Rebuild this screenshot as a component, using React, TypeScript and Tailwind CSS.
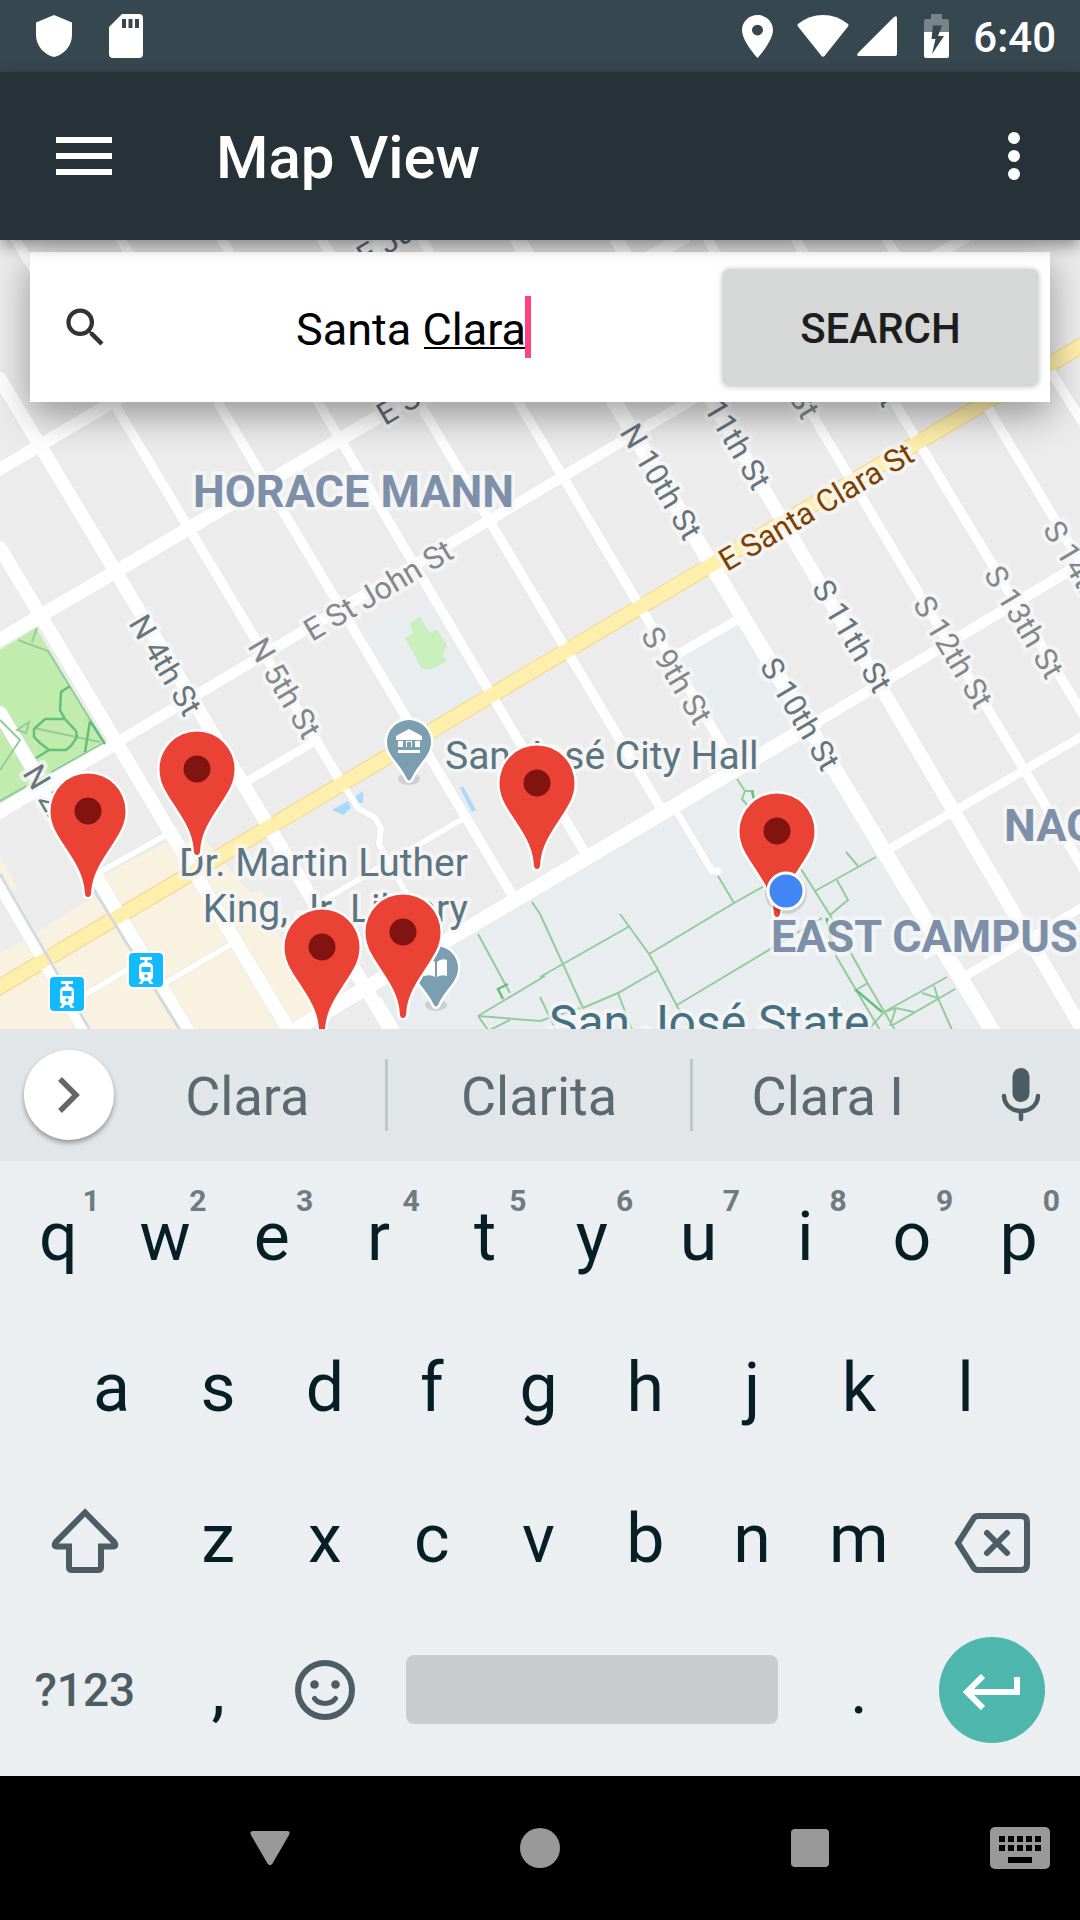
import React from "react";

type Road = { d: string; w: number };

const ROADS: Road[] = [
  { d: "M0 884L86 1032", w: 14 },
  { d: "M0 713L188 1032", w: 14 },
  { d: "M0 548L290 1032", w: 14 },
  { d: "M0 379L392 1032", w: 14 },
  { d: "M16 240L344 787", w: 10 },
  { d: "M121 240L514 898", w: 10 },
  { d: "M222 240L588 858", w: 10 },
  { d: "M322 240L663 812", w: 10 },
  { d: "M422 240L736 768", w: 10 },
  { d: "M518 240L747 624L993 1032", w: 16 },
  { d: "M617 240L1084 1032", w: 14 },
  { d: "M708 240L1084 870", w: 10 },
  { d: "M796 240L1084 716", w: 10 },
  { d: "M887 240L1084 568", w: 10 },
  { d: "M1040 355L1084 424", w: 10 },
  { d: "M0 469L390 238", w: 13 },
  { d: "M-4 642L684 237", w: 14 },
  { d: "M-4 814L114 744", w: 14 },
  { d: "M114 744L540 490L965 238", w: 11 },
  { d: "M288 1034L517 899L815 723", w: 15 },
  { d: "M815 723L1084 562", w: 11 },
  { d: "M678 654L744 616", w: 9 },
  { d: "M886 851L1084 735", w: 9 },
  { d: "M962 978L1084 906", w: 9 },
  { d: "M241 785L317 740", w: 9 },
  { d: "M100 872L168 834", w: 6 },
  { d: "M165 983L230 945", w: 6 },
  { d: "M83 996L128 969", w: 6 },
  { d: "M327 898L461 820", w: 6 },
  { d: "M344 785L358 808L375 818L381 828L379 844L406 893", w: 6 },
  { d: "M678 814L712 871L718 871", w: 7 },
  { d: "M380 1000L398 1030", w: 5 },
];

const PATHS_LIGHT = [
  "M737 779L745 791L754 791M745 791L742 799L748 806",
  "M18 640L48 651L105 744M32 642L37 628M0 801L105 742M0 770L20 740L0 720M34 728L100 742M17 730L29 722L26 733Z",
  "M718 876L734 903L764 886M734 903L649 954L620 914M649 954L658 970L677 1006L696 1040",
  "M540 977L630 926M540 914L583 1008L618 993L658 970M478 934L510 993M478 1016L545 976M478 1016L540 1021L580 1008M478 1016L488 1030M510 1020L490 1030",
  "M677 1005L822 918M532 902L540 914M618 993L632 1030M540 997L556 1030",
  "M801 869L830 915L868 984L895 1030M826 918L836 956L862 1000L880 1030",
  "M815 891L876 857M858 866L846 852M837 880L848 900L830 915",
  "M884 1012L947 977M893 1025L955 989M922 993L938 998L952 1030M938 998L934 986M884 1012L896 1008L914 1012M896 1008L890 1026M854 991L868 983M870 1028L884 1012",
];

const PATHS_DARK = [
  "M70 686L61 692L60 710L65 719L76 731L77 737L71 746L66 750L49 750L40 743L34 737L34 729L45 719L65 719M49 750L36 758M90 721L85 752M90 721L105 744",
  "M827 918L832 950M856 990L882 1012M508 984L498 989L503 999M752 791L754 799",
];

type Label = { t: string; x: number; y: number; r: number; c: string };

const UP = -30.6;
const DOWN = 59.3;
const STREETS: Label[] = [
  { t: "E Julian St", x: 365, y: 268, r: UP, c: "#5f6b72" },
  { t: "E St James St", x: 385, y: 426, r: UP, c: "#5f6b72" },
  { t: "E St John St", x: 312, y: 642, r: UP, c: "#83888b" },
  { t: "E Santa Clara St", x: 727, y: 572, r: UP, c: "#7d4000" },
  { t: "N 2nd St", x: 22, y: 773, r: DOWN, c: "#67757c" },
  { t: "N 4th St", x: 128, y: 623, r: DOWN, c: "#67757c" },
  { t: "N 5th St", x: 247, y: 646, r: DOWN, c: "#83888b" },
  { t: "N 10th St", x: 619, y: 432, r: DOWN, c: "#67757c" },
  { t: "N 11th St", x: 688, y: 382, r: DOWN, c: "#67757c" },
  { t: "N 12th St", x: 737, y: 311, r: DOWN, c: "#83888b" },
  { t: "N 13th St", x: 818, y: 299, r: DOWN, c: "#67757c" },
  { t: "S 9th St", x: 640, y: 635, r: DOWN, c: "#83888b" },
  { t: "S 10th St", x: 759, y: 666, r: DOWN, c: "#67757c" },
  { t: "S 11th St", x: 811, y: 588, r: DOWN, c: "#67757c" },
  { t: "S 12th St", x: 912, y: 604, r: DOWN, c: "#83888b" },
  { t: "S 13th St", x: 983, y: 574, r: DOWN, c: "#83888b" },
  { t: "S 14th St", x: 1042, y: 529, r: DOWN, c: "#83888b" },
];

const PINS = [
  [197, 769],
  [88, 811],
  [537, 783],
  [777, 831],
  [403, 932],
  [322, 947],
];

function Train({ x, y }: { x: number; y: number }) {
  return (
    <g transform={`translate(${x} ${y})`}>
      <rect x="-2" y="-2" width="38" height="38" rx="6" fill="#fff" />
      <rect width="34" height="34" rx="4" fill="#12bbff" />
      <path d="M11 4h12v3h-4.500v2.500h1.500q4 1 4 5v9q0 3-2.500 3.500l3 4h-3.500l-2-3h-4l-2 3h-3.500l3-4Q10 26.500 10 23.500v-9q0-4 4-5h1.500V7H11z" fill="#fff" />
      <rect x="12.500" y="14" width="9" height="5" fill="#12bbff" />
      <circle cx="17" cy="23" r="1.800" fill="#12bbff" />
    </g>
  );
}

function PoiPin({ x, y, children }: { x: number; y: number; children: React.ReactNode }) {
  return (
    <g transform={`translate(${x} ${y})`}>
      <ellipse cy="37" rx="11" ry="6" fill="#000" opacity="0.12" />
      <path
        d="M-22 0A22 22 0 0 1 22 0C22 14 10 20 2 37Q0 40 -2 37C-10 20 -22 14 -22 0Z"
        fill="#7b9eb0"
        stroke="#fff"
        strokeWidth="5"
        paintOrder="stroke"
      />
      {children}
    </g>
  );
}

function StreetMap() {
  return (
    <svg
      className="absolute inset-0 h-full w-full"
      viewBox="0 240 1080 789"
      preserveAspectRatio="xMidYMid slice"
      role="img"
      aria-label="Map of downtown San José"
      fontFamily="Roboto, sans-serif"
    >
      <rect y="240" width="1080" height="789" fill="#ececec" />
      <path d="M358 630L424 598L482 693L413 726Z" fill="#e9edf0" />
      <path d="M741 625L681 657L712 723L726 750L800 732Z" fill="#e9edf0" />
      <path d="M375 997L736 772L805 735L884 853L950 965L990 1032H392Z" fill="#e9edf0" />
      <path d="M410 623L420 617L429 632L437 630L447 645L442 655L447 661L432 669L422 669L405 638L413 633Z" fill="#c8efbc" />
      <path d="M0 650L36 628L105 744L0 806Z" fill="#c1ecae" />
      <path d="M36 933L100 893L103 875L165 843L205 840L250 893L262 890L300 990L335 970L352 990L289 1032H0V953Z" fill="#faf2e1" />
      <path d="M0 857L17 888L8 894L0 882Z" fill="#faf2e1" />
      <path d="M332 810L348 801L351 808L343 815ZM355 797L363 791V803L358 803ZM460 788L463 786L476 810L472 812Z" fill="#a8daff" />
      <g fill="none">
        {ROADS.map((r) => (
          <path key={r.d} d={r.d} stroke="#e2e3e4" strokeWidth={r.w + 1} />
        ))}
        <path d="M-4 989L1084 344" stroke="#f3d68c" strokeWidth="16" />
        {ROADS.map((r) => (
          <path key={r.d} d={r.d} stroke="#fff" strokeWidth={r.w} strokeLinecap="round" />
        ))}
        <path d="M924 960L945 948L928 930Z" fill="#fff" />
        <path d="M-4 989L1084 344" stroke="#ffefac" strokeWidth="14" />
        <path d="M0 874L90 1030M94 890L180 1030" stroke="#d6d9dc" strokeWidth="3" />
        {PATHS_LIGHT.map((d) => (
          <path key={d} d={d} stroke="#93cc9b" strokeWidth="2" />
        ))}
        {PATHS_DARK.map((d) => (
          <path key={d} d={d} stroke="#63bf79" strokeWidth="2.500" />
        ))}
      </g>

      <g fontSize="31" stroke="#f7f7f7" strokeOpacity="0.75" strokeWidth="8" strokeLinejoin="round" paintOrder="stroke">
        {STREETS.map((s) => (
          <text key={s.t} transform={`translate(${s.x} ${s.y}) rotate(${s.r})`} fill={s.c}>
            {s.t}
          </text>
        ))}
      </g>

      <Train x={129} y={953} />
      <Train x={50} y={977} />

      <g stroke="#f7f7f7" strokeOpacity="0.75" strokeWidth="8" strokeLinejoin="round" paintOrder="stroke">
        <g fontSize="45" fontWeight="700" fill="#7d8fa9">
          <text x="193" y="507">HORACE MANN</text>
          <text x="1004" y="841">NAGLEE PARK</text>
          <text x="771" y="952">EAST CAMPUS</text>
        </g>
        <g fontSize="39" fill="#5b7582">
          <text x="445" y="769">San José City Hall</text>
          <text x="468" y="876" textAnchor="end">Dr. Martin Luther</text>
          <text x="468" y="922" textAnchor="end">King, Jr. Library</text>
        </g>
        <text x="549" y="1039" fontSize="48" fill="#447082">San José State</text>
      </g>

      <PoiPin x={409} y={742}>
        <path d="M0-13L13-6V-2H-13V-6ZM-11-1h5v6h-5zM-3-1h6v6h-1V0h-4V5H-3zM6-1h5v6H6zM-11 8H11V11H-11Z" fill="#fff" />
      </PoiPin>
      <PoiPin x={436} y={968}>
        <path d="M-12-8Q-5-10 -1-6V9Q-5 6 -12 8ZM11-8Q5-10 1-6V9Q5 6 11 8Z" fill="#fff" />
      </PoiPin>

      {PINS.map(([x, y]) => (
        <g key={x} transform={`translate(${x} ${y})`}>
          <path
            d="M-37.500 0A37.500 37.500 0 0 1 37.500 0C37.500 14 31 23 24 34C13 51 4 63 3 83Q2.500 86 0 86Q-2.500 86-3 83C-4 63-13 51-24 34C-31 23-37.500 14-37.500 0Z"
            fill="#ea4335"
            stroke="#fff"
            strokeWidth="5"
            paintOrder="stroke"
          />
          <circle r="13.500" fill="#811411" />
        </g>
      ))}

      <circle cx="786" cy="893" r="21" fill="#000" opacity="0.12" />
      <circle cx="786" cy="891" r="18" fill="#4285f4" stroke="#fff" strokeWidth="3" />
    </svg>
  );
}

function StatusBar() {
  return (
    <header className="flex h-[72px] shrink-0 items-center bg-[#37474f] pl-9 pr-6 text-white">
      <svg className="mr-[37px] h-[42px] w-9" viewBox="0 0 36 42" fill="#fff" aria-hidden="true">
        <path d="M18 0L36 7.500V20C36 31 27.500 40 18 42C8.500 40 0 31 0 20V7.500Z" />
      </svg>
      <svg className="h-11 w-[34px]" viewBox="0 0 34 44" fill="#fff" fillRule="evenodd" aria-hidden="true">
        <path d="M13 0H30Q34 0 34 4V40Q34 44 30 44H4Q0 44 0 40V13ZM13 5V14H17V5ZM19.500 5V14H23.500V5ZM26 5V14H30V5Z" />
      </svg>
      <span className="flex-1" />
      <svg className="mr-6 h-[43px] w-[31px]" viewBox="5 2 14 20" preserveAspectRatio="none" fill="#fff" aria-hidden="true">
        <path d="M12 2C8.130 2 5 5.130 5 9c0 5.250 7 13 7 13s7-7.750 7-13c0-3.870-3.130-7-7-7zm0 9.500a2.500 2.500 0 0 1 0-5 2.500 2.500 0 0 1 0 5z" />
      </svg>
      <svg className="mr-2 h-[42px] w-[52px]" viewBox="0 0 52 42" fill="#fff" aria-hidden="true">
        <path d="M1 9Q12 0 26 0T51 9Q52 10 51 11.500L27.500 41Q26 42.500 24.500 41L1 11.500Q0 10 1 9Z" />
      </svg>
      <svg className="mr-[27px] h-10 w-10" viewBox="0 0 40 40" fill="#fff" aria-hidden="true">
        <path d="M37 1Q40-1 40 2V38Q40 40 38 40H2Q-1 40 1 37Z" />
      </svg>
      <svg className="mr-6 h-11 w-[25px]" viewBox="0 0 25 44" aria-hidden="true">
        <path d="M7 0H18V5H23Q25 5 25 7V18H0V7Q0 5 2 5H7Z" fill="#788489" />
        <path d="M0 18H25V42Q25 44 23 44H2Q0 44 0 42Z" fill="#fff" />
        <path d="M9 11.500H18L14 22H20L8 40L11.500 25H7.500Z" fill="#37474f" />
      </svg>
      <time className="pt-1 text-[42px] leading-none font-medium">6:40</time>
    </header>
  );
}

function AppBar() {
  return (
    <div className="relative z-10 flex h-[168px] shrink-0 items-center bg-[#263238] pl-14 pr-12 text-white shadow-[0_6px_14px_rgba(0,0,0,0.4)]">
      <button aria-label="Open menu" className="flex w-14 flex-col gap-[10px]">
        <span className="h-[6px] w-full bg-white" />
        <span className="h-[6px] w-full bg-white" />
        <span className="h-[6px] w-full bg-white" />
      </button>
      <h1 className="ml-[104px] flex-1 pt-1 text-[60px] leading-none font-medium">Map View</h1>
      <button aria-label="More options" className="flex w-9 flex-col items-center gap-[6px]">
        <span className="size-3 rounded-full bg-white" />
        <span className="size-3 rounded-full bg-white" />
        <span className="size-3 rounded-full bg-white" />
      </button>
    </div>
  );
}

function SearchCard() {
  return (
    <form
      className="relative mx-[30px] mt-3 flex h-[150px] items-center bg-white pl-[30px] pr-3 shadow-[0_12px_36px_rgba(0,0,0,0.38)]"
      onSubmit={(e) => e.preventDefault()}
    >
      <svg className="size-[51px] shrink-0" viewBox="0 0 24 24" fill="#333" aria-hidden="true">
        <path d="M15.500 14h-.79l-.28-.27A6.471 6.471 0 0 0 16 9.500 6.500 6.500 0 1 0 9.500 16c1.610 0 3.090-.59 4.230-1.570l.27.28v.79l5 4.990L20.490 19l-4.990-5zm-6 0C7.010 14 5 11.990 5 9.500S7.010 5 9.500 5 14 7.010 14 9.500 11.990 14 9.500 14z" />
      </svg>
      <div className="relative mr-3 h-[62px] flex-1">
        <input
          aria-label="Search location"
          defaultValue="Santa Clara"
          className="h-full w-full bg-transparent pt-1 text-center text-[45px] text-black outline-none"
        />
        <span className="absolute bottom-[9px] left-[calc(50%+13px)] h-[2px] w-[102px] bg-black" />
        <span className="absolute top-0 left-[calc(50%+114px)] h-full w-[6px] bg-[#ff4081]" />
      </div>
      <button
        type="submit"
        className="h-[116px] w-[315px] shrink-0 rounded-md bg-[#d6d7d7] pt-1 text-[42px] leading-none font-medium text-[#1d1d1d] shadow-[0_1px_6px_rgba(0,0,0,0.3)]"
      >
        SEARCH
      </button>
    </form>
  );
}

const SUGGESTION = "h-[72px] pt-1 text-[54px] leading-none text-[#5b6970]";

function Suggestions() {
  return (
    <div className="flex h-[132px] items-center bg-[#e2e6e9]">
      <div className="w-[110px] shrink-0 pl-6">
        <button aria-label="Expand toolbar" className="flex size-[90px] items-center justify-center rounded-full bg-white shadow-[0_3px_5px_rgba(0,0,0,0.35)]">
          <svg className="h-9 w-[22px]" viewBox="0 0 22 36" fill="none" stroke="#666" strokeWidth="5.500" aria-hidden="true">
            <path d="M2 2L18 18L2 34" />
          </svg>
        </button>
      </div>
      <button className={`flex-[274] ${SUGGESTION}`}>Clara</button>
      <button className={`flex-[302] border-x-[3px] border-[#c1c6c9] ${SUGGESTION}`}>Clarita</button>
      <button className={`flex-[268] ${SUGGESTION}`}>Clara I</button>
      <button aria-label="Voice input" className="flex w-[118px] shrink-0 justify-center">
        <svg className="h-[54px] w-10" viewBox="0 0 40 54" fill="none" stroke="#4c5c64" strokeLinecap="round" aria-hidden="true">
          <rect x="11.500" y="0" width="17" height="34" rx="8.500" fill="#4c5c64" stroke="none" />
          <path d="M3 28C4 48 36 48 37 28M20 44V51" strokeWidth="4.500" />
        </svg>
      </button>
    </div>
  );
}

function Key({ label, hint }: { label: string; hint?: string }) {
  return (
    <button className="relative h-full min-w-0 flex-[107] text-[68px] leading-none text-[#061e26]">
      {label}
      {hint && <span className="absolute top-[25px] right-3 text-[30px] leading-none font-bold text-[#6f7b81]">{hint}</span>}
    </button>
  );
}

const ROW = "flex h-[151px] items-center";
const WIDE_ROW = `${ROW} pl-[5px] pr-[8px]`;
const ICON_KEY = "flex h-full items-center justify-center";

function Keyboard() {
  return (
    <section aria-label="Keyboard" className="shrink-0 bg-[#ebeff2]">
      <Suggestions />
      <div className="pb-[11px]">
        <div className={WIDE_ROW}>
          {"qwertyuiop".split("").map((k, i) => (
            <Key key={k} label={k} hint={String((i + 1) % 10)} />
          ))}
        </div>
        <div className={`${ROW} pl-[58px] pr-[61px]`}>
          {"asdfghjkl".split("").map((k) => (
            <Key key={k} label={k} />
          ))}
        </div>
        <div className={WIDE_ROW}>
          <button aria-label="Shift" className={`flex-[160] ${ICON_KEY}`}>
            <svg className="mt-1 h-[66px] w-[68px]" viewBox="0 0 68 66" fill="none" stroke="#4d5d65" strokeWidth="6" aria-hidden="true">
              <path d="M34 4.500L5 34Q2 38.500 6 38.500H18V59Q18 62 21 62H47Q50 62 50 59V38.500H62Q66 38.500 63 34Z" />
            </svg>
          </button>
          {"zxcvbnm".split("").map((k) => (
            <Key key={k} label={k} />
          ))}
          <button aria-label="Backspace" className={`flex-[160] ${ICON_KEY}`}>
            <svg className="mt-2 h-[60px] w-[76px]" viewBox="0 0 76 60" fill="none" stroke="#4d5d65" strokeWidth="6" aria-hidden="true">
              <path d="M4 30L19.500 5.500Q21 3 24 3H67Q73 3 73 9V51Q73 57 67 57H24Q21 57 19.500 54.500Z" />
              <path d="M33 20L53 40M53 20L33 40" strokeLinecap="round" />
            </svg>
          </button>
        </div>
        <div className={WIDE_ROW}>
          <button className="h-full flex-[160] text-[46px] leading-none font-medium text-[#4d5d65]">?123</button>
          <Key label="," />
          <button aria-label="Emoji" className={`flex-[107] ${ICON_KEY}`}>
            <svg className="size-[60px]" viewBox="0 0 60 60" fill="none" stroke="#4d5d65" aria-hidden="true">
              <circle cx="30" cy="30" r="27" strokeWidth="6" />
              <circle cx="19.500" cy="24.500" r="4.300" fill="#4d5d65" stroke="none" />
              <circle cx="40.500" cy="24.500" r="4.300" fill="#4d5d65" stroke="none" />
              <path d="M19.500 38.500C24 45 36 45 40.500 38.500" strokeWidth="5" strokeLinecap="round" />
            </svg>
          </button>
          <div className="flex-[428]">
            <button aria-label="Space" className="mx-7 block h-[69px] w-[calc(100%-56px)] rounded-lg bg-[#c9cdd0]" />
          </div>
          <Key label="." />
          <div className={`flex-[160] ${ICON_KEY}`}>
            <button aria-label="Enter" className="flex size-[106px] items-center justify-center rounded-full bg-[#4eb6ac]">
              <svg className="mt-1 h-9 w-[58px]" viewBox="0 0 58 36" fill="none" stroke="#fff" strokeWidth="6" aria-hidden="true">
                <path d="M20 2L4 18L20 34M5 18H54V3" />
              </svg>
            </button>
          </div>
        </div>
      </div>
    </section>
  );
}

function NavBar() {
  return (
    <nav className="grid h-36 shrink-0 grid-cols-[1fr_2fr_2fr_2fr_1fr] items-center bg-black">
      <span />
      <button aria-label="Back" className="flex justify-center">
        <svg className="h-9 w-10" viewBox="0 0 40 36" fill="#999" aria-hidden="true">
          <path d="M3 1H37Q41 1 39 5L22.500 33.500Q20 37 17.500 33.500L1 5Q-1 1 3 1Z" />
        </svg>
      </button>
      <button aria-label="Home" className="flex justify-center">
        <span className="size-10 rounded-full bg-[#999]" />
      </button>
      <button aria-label="Recent apps" className="flex justify-center">
        <span className="size-[38px] rounded-sm bg-[#999]" />
      </button>
      <button aria-label="Switch keyboard" className="flex justify-end pr-[30px]">
        <svg className="h-[42px] w-[60px]" viewBox="0 0 60 42" aria-hidden="true">
          <rect width="60" height="42" rx="5" fill="#999" />
          <path d="M9 12H52M9 21H52" stroke="#000" strokeWidth="6" strokeDasharray="6 3" />
          <rect x="18" y="30" width="24" height="6" fill="#000" />
        </svg>
      </button>
    </nav>
  );
}

export default function App() {
  return (
    <div className="flex min-h-screen flex-col font-[Roboto,sans-serif]">
      <StatusBar />
      <AppBar />
      <main className="relative flex-1 overflow-hidden">
        <StreetMap />
        <SearchCard />
      </main>
      <Keyboard />
      <NavBar />
    </div>
  );
}
